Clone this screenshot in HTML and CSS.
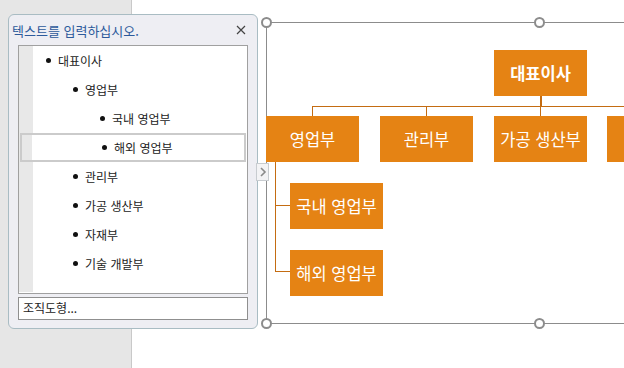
FILE: index.html
```html
<!DOCTYPE html>
<html lang="ko">
    <head>
        <title></title>
        <meta charset="UTF-8">
        <meta name="viewport" content="width=device-width, initial-scale=1">
        <link rel="stylesheet" href="styles.css">
    </head>
    <body>
        <div class="app">
            <div class="sidebar"></div>
            <div class="canvas">
                <div class="frame"></div>
                <i class="handle h1"></i>
                <i class="handle h2"></i>
                <i class="handle h3"></i>
                <i class="handle h4"></i>

                <div class="line v top-stem"></div>
                <div class="line h top-bar"></div>
                <div class="line v drop d1"></div>
                <div class="line v drop d2"></div>
                <div class="line v drop d3"></div>
                <div class="line v side-stem"></div>
                <div class="line h side s1"></div>
                <div class="line h side s2"></div>

                <div class="node n-ceo">대표이사</div>
                <div class="node n-sales">영업부</div>
                <div class="node n-admin">관리부</div>
                <div class="node n-prod">가공 생산부</div>
                <div class="node n-more"></div>
                <div class="node n-dom">국내 영업부</div>
                <div class="node n-intl">해외 영업부</div>
            </div>
        </div>

        <div class="panel">
            <div class="panel-head">
                <span class="panel-title">텍스트를 입력하십시오.</span>
                <svg class="close" width="10" height="10" viewBox="0 0 10 10">
                    <path d="M1 1 L9 9 M9 1 L1 9" stroke="#444" stroke-width="1.2" fill="none"/>
                </svg>
            </div>
            <div class="list">
                <ul>
                    <li class="lv0">대표이사</li>
                    <li class="lv1">영업부</li>
                    <li class="lv2">국내 영업부</li>
                    <li class="lv2 selected">해외 영업부</li>
                    <li class="lv1">관리부</li>
                    <li class="lv1">가공 생산부</li>
                    <li class="lv1">자재부</li>
                    <li class="lv1">기술 개발부</li>
                </ul>
            </div>
            <div class="caption">조직도형...</div>
        </div>

        <div class="tab">
            <svg width="8" height="10" viewBox="0 0 8 10">
                <path d="M2 1 L6 5 L2 9" stroke="#8a8a8a" stroke-width="1.6" fill="none"/>
            </svg>
        </div>
    </body>
</html>
```

FILE: styles.css
```css
*{
    margin: 0;
    padding: 0;
    box-sizing: border-box;
}
body{
    font-family: "Noto Sans CJK KR", "Noto Sans", sans-serif;
    background: #fff;
    width: 624px;
    height: 368px;
    overflow: hidden;
    position: relative;
}
.app{
    display: flex;
    height: 368px;
}
.sidebar{
    width: 132px;
    background: #e6e6e6;
    border-right: 1px solid #c9c9c9;
}
.canvas{
    flex: 1;
    position: relative;
    overflow: hidden;
}

/* selection frame */
.frame{
    position: absolute;
    left: 134px;
    top: 22px;
    width: 400px;
    height: 302px;
    border: 1px solid #8c8c8c;
}
.handle{
    position: absolute;
    width: 11px;
    height: 11px;
    border: 2px solid #8c8c8c;
    border-radius: 50%;
    background: #fff;
}
.h1{ left: 129px; top: 17px; }
.h2{ left: 402px; top: 17px; }
.h3{ left: 129px; top: 318px; }
.h4{ left: 402px; top: 318px; }

/* connectors */
.line{
    position: absolute;
    background: #c46c12;
}
.line.v{ width: 1px; }
.line.h{ height: 1px; }
.top-stem{ left: 408px; top: 96px; height: 11px; width: 2px !important; }
.top-bar{ left: 180px; top: 106px; width: 320px; }
.drop{ top: 106px; height: 10px; }
.d1{ left: 180px; }
.d2{ left: 294px; }
.d3{ left: 408px; }
.side-stem{ left: 143px; top: 162px; height: 110px; }
.side{ left: 143px; width: 15px; }
.s1{ top: 205px; }
.s2{ top: 271px; }

/* nodes */
.node{
    position: absolute;
    width: 93px;
    height: 46px;
    background: #e58314;
    color: #fff;
    font-size: 16.5px;
    display: flex;
    align-items: center;
    justify-content: center;
    white-space: nowrap;
}
.n-ceo{ left: 362px; top: 50px; font-weight: bold; }
.n-sales{ left: 134px; top: 116px; }
.n-admin{ left: 248px; top: 116px; }
.n-prod{ left: 362px; top: 116px; }
.n-more{ left: 475px; top: 116px; }
.n-dom{ left: 158px; top: 183px; }
.n-intl{ left: 158px; top: 250px; }

/* text pane */
.panel{
    position: absolute;
    left: 8px;
    top: 14px;
    width: 250px;
    height: 315px;
    background: #eeeef3;
    border: 1px solid #a9bcc3;
    border-radius: 6px;
    padding: 0 9px;
}
.panel-head{
    display: flex;
    justify-content: space-between;
    align-items: center;
    height: 30px;
    margin-left: -6px;
    padding-right: 1px;
}
.panel-title{
    color: #2d5a9b;
    font-size: 13px;
}
.close{
    margin-right: 1px;
}
.list{
    height: 249px;
    background: #fff;
    border: 1px solid #a0a0a0;
    position: relative;
}
.list::before{
    content: "";
    position: absolute;
    left: 0;
    top: 0;
    bottom: 1px;
    width: 14px;
    background: #e8e8e8;
}
.list ul{
    list-style: none;
    position: relative;
}
.list li{
    height: 29px;
    display: flex;
    align-items: center;
    font-size: 12px;
    color: #222;
    position: relative;
}
.list li::before{
    content: "";
    width: 5px;
    height: 5px;
    border-radius: 50%;
    background: #111;
    margin-right: 7px;
}
.lv0{ padding-left: 27px; }
.lv1{ padding-left: 54px; }
.lv2{ padding-left: 81px; }
.list li.selected{
    margin: 0 1px;
    padding-left: 80px;
    border: 2px solid #cbcbcb;
    background: linear-gradient(to right, #e8e8e8 10px, #fff 10px);
}
.caption{
    margin-top: 3px;
    height: 23px;
    background: #fff;
    border: 1px solid #8f8f8f;
    font-size: 12px;
    color: #222;
    padding-left: 4px;
    line-height: 20px;
}
.tab{
    position: absolute;
    left: 256px;
    top: 163px;
    width: 13px;
    height: 18px;
    background: #f3f3f5;
    border: 1px solid #c8ccd0;
    display: flex;
    align-items: center;
    justify-content: center;
}
```
